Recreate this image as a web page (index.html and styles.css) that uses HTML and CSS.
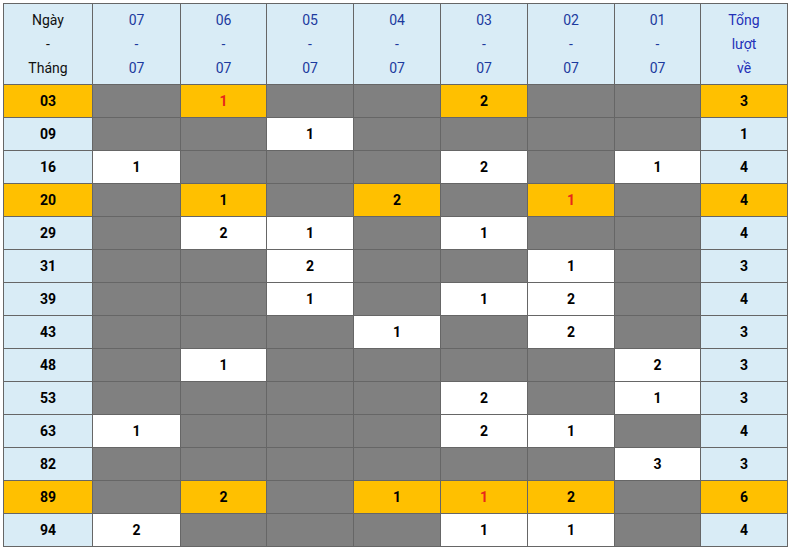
FILE: index.html
```html
<!DOCTYPE html>
<html lang="vi">
<head>
<meta charset="utf-8">
<title>Thống kê</title>
<link rel="stylesheet" href="styles.css">
</head>
<body>
<table class="stat">
<colgroup>
<col class="c89"><col class="c88"><col class="c86"><col class="c87"><col class="c87"><col class="c87"><col class="c87"><col class="c86"><col class="c87">
</colgroup>
<thead>
<tr>
<th class="lbl">Ngày<br>-<br>Tháng</th>
<th>07<br>-<br>07</th>
<th>06<br>-<br>07</th>
<th>05<br>-<br>07</th>
<th>04<br>-<br>07</th>
<th>03<br>-<br>07</th>
<th>02<br>-<br>07</th>
<th>01<br>-<br>07</th>
<th class="tot">Tổng<br>lượt<br>về</th>
</tr>
</thead>
<tbody>
<tr class="hit"><td class="k">03</td><td class="g"></td><td class="y r">1</td><td class="g"></td><td class="g"></td><td class="y">2</td><td class="g"></td><td class="g"></td><td class="k">3</td></tr>
<tr><td class="k">09</td><td class="g"></td><td class="g"></td><td>1</td><td class="g"></td><td class="g"></td><td class="g"></td><td class="g"></td><td class="k">1</td></tr>
<tr><td class="k">16</td><td>1</td><td class="g"></td><td class="g"></td><td class="g"></td><td>2</td><td class="g"></td><td>1</td><td class="k">4</td></tr>
<tr class="hit"><td class="k">20</td><td class="g"></td><td class="y">1</td><td class="g"></td><td class="y">2</td><td class="g"></td><td class="y r">1</td><td class="g"></td><td class="k">4</td></tr>
<tr><td class="k">29</td><td class="g"></td><td>2</td><td>1</td><td class="g"></td><td>1</td><td class="g"></td><td class="g"></td><td class="k">4</td></tr>
<tr><td class="k">31</td><td class="g"></td><td class="g"></td><td>2</td><td class="g"></td><td class="g"></td><td>1</td><td class="g"></td><td class="k">3</td></tr>
<tr><td class="k">39</td><td class="g"></td><td class="g"></td><td>1</td><td class="g"></td><td>1</td><td>2</td><td class="g"></td><td class="k">4</td></tr>
<tr><td class="k">43</td><td class="g"></td><td class="g"></td><td class="g"></td><td>1</td><td class="g"></td><td>2</td><td class="g"></td><td class="k">3</td></tr>
<tr><td class="k">48</td><td class="g"></td><td>1</td><td class="g"></td><td class="g"></td><td class="g"></td><td class="g"></td><td>2</td><td class="k">3</td></tr>
<tr><td class="k">53</td><td class="g"></td><td class="g"></td><td class="g"></td><td class="g"></td><td>2</td><td class="g"></td><td>1</td><td class="k">3</td></tr>
<tr><td class="k">63</td><td>1</td><td class="g"></td><td class="g"></td><td class="g"></td><td>2</td><td>1</td><td class="g"></td><td class="k">4</td></tr>
<tr><td class="k">82</td><td class="g"></td><td class="g"></td><td class="g"></td><td class="g"></td><td class="g"></td><td class="g"></td><td>3</td><td class="k">3</td></tr>
<tr class="hit"><td class="k">89</td><td class="g"></td><td class="y">2</td><td class="g"></td><td class="y">1</td><td class="y r">1</td><td class="y">2</td><td class="g"></td><td class="k">6</td></tr>
<tr><td class="k">94</td><td>2</td><td class="g"></td><td class="g"></td><td class="g"></td><td>1</td><td>1</td><td class="g"></td><td class="k">4</td></tr>
</tbody>
</table>
</body>
</html>
```
FILE: styles.css
```css
html, body {
  margin: 0;
  padding: 0;
  background: #ffffff;
}
body {
  padding: 3px 0 0 3px;
  font-family: Roboto, "Liberation Sans", Arial, sans-serif;
}
.stat {
  border-collapse: collapse;
  width: 785px;
  table-layout: fixed;
  font-size: 14px;
  color: #000;
}
.c89 { width: 89px; }
.c88 { width: 88px; }
.c87 { width: 87px; }
.c86 { width: 86px; }
.stat th, .stat td {
  border: 1px solid #666666;
  text-align: center;
  padding: 0;
}
.stat th {
  background: #d9ecf6;
  font-weight: normal;
  color: #1c3a9e;
  line-height: 24px;
  height: 80px;
}
.stat th.lbl {
  color: #111;
}
.stat th.tot {
  color: #2430b8;
}
.stat td {
  height: 32px;
  font-weight: bold;
  background: #ffffff;
}
.stat td.k {
  background: #d9ecf6;
}
.stat tr.hit td.k {
  background: #ffc000;
}
.stat td.g {
  background: #808080;
}
.stat td.y {
  background: #ffc000;
}
.stat td.r {
  color: #e8261c;
}
```
